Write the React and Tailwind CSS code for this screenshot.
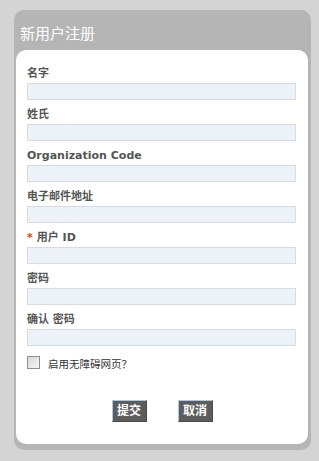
import React from "react";

const fields = [
  { label: "名字" },
  { label: "姓氏" },
  { label: "Organization Code" },
  { label: "电子邮件地址" },
  { label: "用户 ID", required: true },
  { label: "密码", type: "password" },
  { label: "确认 密码", type: "password" },
];

const Field = ({ label, required, type }) => (
  <div className="mb-[8px]">
    <label className="block text-[11px] leading-[14px] font-bold text-[#555555]">
      {required && <span className="text-[#e0400a] mr-[4px]">*</span>}
      {label}
    </label>
    <input
      type={type || "text"}
      className="mt-[2px] block w-[269px] h-[17px] bg-[#edf1f8] border border-[#d6dce6] outline-none"
    />
  </div>
);

export default function App() {
  return (
    <div
      className="min-h-[461px] bg-[#d4d4d4] pt-[10px] px-[14px]"
      style={{ fontFamily: '"DejaVu Sans", Verdana, "Noto Sans CJK SC", sans-serif' }}
    >
      <div className="w-[297px] bg-[#b5b5b5] rounded-[10px] pl-[2px] pr-[3px] pb-[6px]">
        <div
          className="h-[40px] pt-[15px] pl-[4px] text-[15px] leading-[16px] text-white"
          style={{ fontFamily: '"Noto Sans CJK SC", sans-serif' }}
        >
          新用户注册
        </div>
        <div className="bg-white rounded-[10px] pt-[17px] pl-[11px] pb-[22px]">
          {fields.map((f) => (
            <Field key={f.label} {...f} />
          ))}
          <div className="flex items-center">
            <div className="w-[13px] h-[13px] border border-[#8e8e8e] bg-gradient-to-br from-[#d8d8d8] to-[#f6f6f6]" />
            <span className="ml-[8px] text-[10.5px] leading-[14px] text-[#333333] mt-[3px]">
              启用无障碍网页？
            </span>
          </div>
          <div className="flex justify-center gap-[31px] mt-[29px] pr-[11px]">
            <button className="w-[35px] h-[22px] bg-[#5d5d5d] border border-t-[#a9c8e6] border-l-[#a9c8e6] border-r-[#4a4a4a] border-b-[#4a4a4a] text-white text-[12px] font-bold leading-none">
              提交
            </button>
            <button className="w-[35px] h-[22px] bg-[#5d5d5d] border border-t-[#a9c8e6] border-l-[#a9c8e6] border-r-[#4a4a4a] border-b-[#4a4a4a] text-white text-[12px] font-bold leading-none">
              取消
            </button>
          </div>
        </div>
      </div>
    </div>
  );
}
